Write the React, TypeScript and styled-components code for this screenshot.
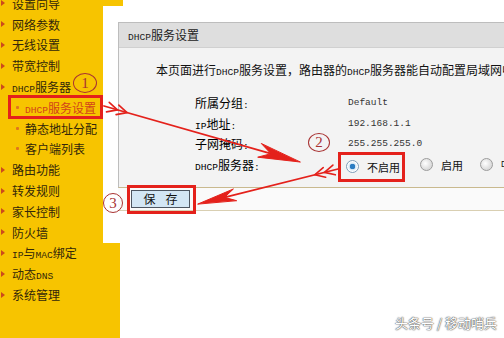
import { FC, Fragment, ReactNode } from "react";
import styled, { createGlobalStyle } from "styled-components";

const YELLOW = "#f7c400";
const RED = "#e4211b";
const INK = "#a83232";

const GlobalStyle = createGlobalStyle`
  html, body {
    margin: 0;
    padding: 0;
  }
  body {
    width: 504px;
    height: 338px;
    overflow: hidden;
    font-family: "Noto Sans CJK SC", "Noto Sans", sans-serif;
    background: #fff;
  }
`;

const Page = styled.div`
  position: relative;
  display: flex;
  width: 504px;
  height: 338px;
  overflow: hidden;
  background: ${YELLOW};
`;

const Sidebar = styled.nav`
  width: 103px;
  flex: none;
  display: flex;
  flex-direction: column;
  margin-top: -7px;
`;

const Item = styled.div<{ $sub?: boolean; $active?: boolean }>`
  height: 20.8px;
  display: flex;
  align-items: center;
  gap: ${(p) => (p.$sub ? 6 : 7)}px;
  padding-left: ${(p) => (p.$sub ? 16 : 1)}px;
  font-size: 12px;
  color: ${(p) => (p.$active ? "#d2431a" : "#33270a")};
  white-space: nowrap;

  ${(p) =>
    p.$active &&
    `
    height: 24px;
    margin: -1.6px 0 -1.6px 8px;
    padding-left: 5px;
    border: 3px solid ${RED};
    box-sizing: border-box;
  `}
`;

const Arrowhead = styled.span`
  width: 0;
  height: 0;
  border-top: 3px solid transparent;
  border-bottom: 3px solid transparent;
  border-left: 4px solid #cc4a1c;
`;

const Dot = styled.span`
  width: 3px;
  height: 3px;
  border-radius: 1px;
  background: #e0761c;
`;

const Latin = styled.span`
  font-family: "Liberation Mono", "DejaVu Sans Mono", monospace;
  font-size: 0.8em;
  vertical-align: 0.05em;
`;

const Main = styled.main`
  flex: 1;
  min-width: 0;
  display: flex;
  flex-direction: column;
  overflow: hidden;
`;

const TopArea = styled.section`
  height: 243px;
  flex: none;
  background: #fff;
  display: flex;
  flex-direction: column;
`;

const Notch = styled.div`
  width: 20px;
  height: 6px;
  background: ${YELLOW};
`;

const Panel = styled.div`
  margin: 16px 0 0 15px;
  width: 440px;
  border: 1px solid #bdbdbd;
  border-bottom-color: #c9b98e;
`;

const PanelHeader = styled.div`
  height: 24px;
  line-height: 24px;
  padding-left: 9px;
  background: #dedede;
  border-bottom: 1px solid #d0d0d0;
  font-size: 12px;
  color: #222;
`;

const PanelBody = styled.div`
  height: 139px;
  box-sizing: border-box;
  padding: 15px 0 0 37px;
  background: #f3f3f3;
`;

const Description = styled.p`
  margin: 0;
  font-size: 12px;
  line-height: 14px;
  color: #111;
  white-space: nowrap;
`;

const Form = styled.div`
  margin: 12.6px 0 0 39px;
  display: grid;
  grid-template-columns: 153px auto;
  grid-auto-rows: 20.7px;
  align-items: center;
`;

const Label = styled.span`
  font-size: 12px;
  color: #000;
  white-space: nowrap;
`;

const Value = styled.span`
  font-family: "Liberation Mono", "DejaVu Sans Mono", monospace;
  font-size: 9.5px;
  color: #333;
`;

const RadioGroup = styled.div`
  display: flex;
  align-items: center;
  height: 20.7px;
  white-space: nowrap;
`;

const RadioOption = styled.label<{ $gap: number }>`
  display: flex;
  align-items: center;
  gap: 8px;
  height: 24px;
  margin-right: ${(p) => p.$gap}px;
  font-size: 11px;
  color: #111;
`;

const RadioMark = styled.span<{ $checked?: boolean }>`
  width: 11px;
  height: 11px;
  flex: none;
  border-radius: 50%;
  border: 1px solid ${(p) => (p.$checked ? "#7d9db8" : "#9c9c9c")};
  background: ${(p) =>
    p.$checked
      ? "radial-gradient(circle, #2b7cc2 0 2.6px, #cfe3f3 3px, #fff 5px)"
      : "radial-gradient(circle at 40% 40%, #fff 0, #dcdcdc 6px)"};
`;

const Highlight = styled.div<{ $pad: string; $margin: string }>`
  display: flex;
  align-items: center;
  border: 3px solid ${RED};
  padding: ${(p) => p.$pad};
  margin: ${(p) => p.$margin};
  flex: none;
`;

const ButtonRow = styled.div`
  margin-left: 15px;
  width: 440px;
  height: 22px;
  display: flex;
  align-items: flex-start;
  background: #fafafa;
  border-bottom: 1px solid #d9cfb2;
`;

const SaveButton = styled.button`
  width: 59px;
  height: 18px;
  padding: 0;
  border: 1px solid #4d5560;
  background: #d3e6f4;
  font-family: "Noto Sans CJK SC", sans-serif;
  font-size: 12px;
  line-height: 16px;
  letter-spacing: 10px;
  text-indent: 10px;
  color: #111;
`;

const BottomArea = styled.section`
  flex: 1;
  background: #fff;
  border-left: 17px solid ${YELLOW};
`;

const Overlay = styled.svg`
  position: absolute;
  left: 0;
  top: 0;
  pointer-events: none;
`;

const Circled = styled.span<{ $x: number; $y: number; $w: number; $h: number }>`
  position: absolute;
  left: ${(p) => p.$x - p.$w / 2}px;
  top: ${(p) => p.$y - p.$h / 2}px;
  width: ${(p) => p.$w}px;
  height: ${(p) => p.$h}px;
  box-sizing: border-box;
  border: 1.3px solid ${INK};
  border-radius: 50%;
  display: flex;
  align-items: center;
  justify-content: center;
  font-family: "Liberation Serif", serif;
  font-size: 15px;
  line-height: 1;
  color: ${INK};
`;

const Watermark = styled.span`
  position: absolute;
  right: 7px;
  bottom: 6px;
  font-size: 13px;
  color: #fff;
  text-shadow: 0 0 1px #555, 0 0 1px #555, 0 0 2px #888;
  white-space: nowrap;
`;

const mixed = (text: string): ReactNode[] =>
  text
    .split(/([A-Za-z0-9.:]+)/)
    .filter(Boolean)
    .map((part, i) =>
      /[A-Za-z0-9.:]/.test(part) ? <Latin key={i}>{part}</Latin> : <span key={i}>{part}</span>
    );

const menu: { label: string; sub?: boolean; active?: boolean }[] = [
  { label: "设置向导" },
  { label: "网络参数" },
  { label: "无线设置" },
  { label: "带宽控制" },
  { label: "DHCP服务器" },
  { label: "DHCP服务设置", sub: true, active: true },
  { label: "静态地址分配", sub: true },
  { label: "客户端列表", sub: true },
  { label: "路由功能" },
  { label: "转发规则" },
  { label: "家长控制" },
  { label: "防火墙" },
  { label: "IP与MAC绑定" },
  { label: "动态DNS" },
  { label: "系统管理" },
];

const rows = [
  { label: "所属分组:", value: "Default" },
  { label: "IP地址:", value: "192.168.1.1" },
  { label: "子网掩码:", value: "255.255.255.0" },
];

type Pt = [number, number];

const Arrow: FC<{ from: Pt; to: Pt; head: number; wide: number }> = ({ from, to, head, wide }) => {
  const dx = to[0] - from[0];
  const dy = to[1] - from[1];
  const len = Math.hypot(dx, dy);
  const d: Pt = [dx / len, dy / len];
  const n: Pt = [-d[1], d[0]];
  const at = (t: number, s = 0): string =>
    `${from[0] + d[0] * t + n[0] * s},${from[1] + d[1] * t + n[1] * s}`;
  const notch = len - head * 0.72;
  const feathers = [14, 24].map(
    (t) => `M${at(t - 10, 5)} L${at(t)} L${at(t - 10, -5)}`
  );
  return (
    <g stroke={RED} fill="none" strokeLinecap="round" strokeLinejoin="round">
      <path d={`M${at(0)} L${at(notch)}`} strokeWidth={1.8} />
      {feathers.map((f) => (
        <path key={f} d={f} strokeWidth={1.6} />
      ))}
      <polygon
        points={`${at(len)} ${at(len - head, wide)} ${at(notch)} ${at(len - head, -wide)}`}
        fill={RED}
        strokeWidth={1}
      />
    </g>
  );
};

export default function App() {
  return (
    <>
      <GlobalStyle />
      <Page>
        <Sidebar>
          {menu.map((m) => (
            <Item key={m.label} $sub={m.sub} $active={m.active}>
              {m.sub ? <Dot /> : <Arrowhead />}
              <span>{mixed(m.label)}</span>
            </Item>
          ))}
        </Sidebar>

        <Main>
          <TopArea>
            <Notch />
            <Panel>
              <PanelHeader>{mixed("DHCP服务设置")}</PanelHeader>
              <PanelBody>
                <Description>
                  {mixed("本页面进行DHCP服务设置，路由器的DHCP服务器能自动配置局域网中各计算机的TCP/IP协议。")}
                </Description>
                <Form>
                  {rows.map((r) => (
                    <Fragment key={r.label}>
                      <Label>{mixed(r.label)}</Label>
                      <Value>{r.value}</Value>
                    </Fragment>
                  ))}
                  <Label>{mixed("DHCP服务器:")}</Label>
                  <RadioGroup>
                    <Highlight $pad="0 2px 0 5px" $margin="4px 15px 0 -10px">
                      <RadioOption $gap={0}>
                        <RadioMark $checked />
                        不启用
                      </RadioOption>
                    </Highlight>
                    <RadioOption $gap={17}>
                      <RadioMark />
                      启用
                    </RadioOption>
                    <RadioOption $gap={0}>
                      <RadioMark />
                      {mixed("DHCP中继")}
                    </RadioOption>
                  </RadioGroup>
                </Form>
              </PanelBody>
            </Panel>
            <ButtonRow>
              <Highlight $pad="2px 3px 3px 1px" $margin="-3px 0 0 9px">
                <SaveButton>保存</SaveButton>
              </Highlight>
            </ButtonRow>
          </TopArea>
          <BottomArea />
        </Main>

        <Overlay width={504} height={338} viewBox="0 0 504 338">
          <Arrow from={[104, 106]} to={[300, 162]} head={42} wide={7} />
          <Arrow from={[338, 169]} to={[198, 204]} head={38} wide={6} />
        </Overlay>

        <Circled $x={85} $y={83} $w={24} $h={20}>1</Circled>
        <Circled $x={319} $y={142} $w={22} $h={19}>2</Circled>
        <Circled $x={113} $y={203} $w={20} $h={20}>3</Circled>

        <Watermark>头条号 / 移动哨兵</Watermark>
      </Page>
    </>
  );
}
